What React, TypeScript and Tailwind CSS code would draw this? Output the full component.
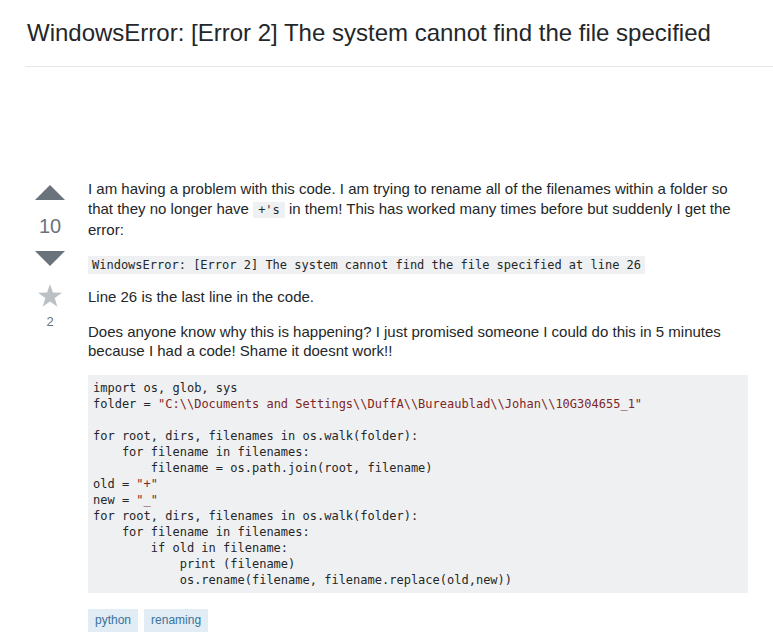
import React from 'react';

const Str = ({ children }: { children: React.ReactNode }) => (
  <span className="text-[#7d2727]">{children}</span>
);

const App = () => {
  return (
    <div className="min-h-[641px] bg-white pl-[25px] text-[#242729] font-['Liberation_Sans',Arial,sans-serif] overflow-hidden">
      {/* Question title */}
      <div className="pt-[18px] pb-[18px] border-b border-[#e4e6e8]">
        <h1 className="text-[24px] leading-[30px] pl-[2px] text-[#242729]">
          WindowsError: [Error 2] The system cannot find the file specified
        </h1>
      </div>

      {/* Post */}
      <div className="flex mt-[112px]">
        {/* Votes */}
        <div className="w-[50px] mr-[13px] flex flex-col items-center pt-[6px]">
          <svg width="30" height="15" viewBox="0 0 30 15">
            <path d="M0 15 L15 0 L30 15 Z" fill="#6a737c" />
          </svg>
          <div className="text-[20px] leading-[24px] text-[#6a737c] mt-[14px]">10</div>
          <svg width="30" height="15" viewBox="0 0 30 15" className="mt-[13px]">
            <path d="M0 0 L30 0 L15 15 Z" fill="#6a737c" />
          </svg>
          <svg width="24" height="23" viewBox="0 0 24 23" className="mt-[18px]">
            <path d="M12 0 L14.9 8.6 L24 8.7 L16.7 14.1 L19.4 22.8 L12 17.5 L4.6 22.8 L7.3 14.1 L0 8.7 L9.1 8.6 Z" fill="#bbc0c4" />
          </svg>
          <div className="text-[13px] leading-[16px] text-[#6a737c] mt-[7px]">2</div>
        </div>

        {/* Body */}
        <div className="w-[660px] text-[15px] leading-[19.5px]">
          <p className="mb-[14px]">
            I am having a problem with this code. I am trying to rename all of the filenames within a folder so
            that they no longer have{' '}
            <code className="bg-[#eff0f1] px-[5px] py-[1px] text-[12px] font-['DejaVu_Sans_Mono',monospace]">+'s</code>{' '}
            in them! This has worked many times before but suddenly I get the error:
          </p>
          <p className="mb-[12px]">
            <code className="bg-[#eff0f1] px-[4px] py-[2px] text-[12px] font-['DejaVu_Sans_Mono',monospace]">
              WindowsError: [Error 2] The system cannot find the file specified at line 26
            </code>
          </p>
          <p className="mb-[15px]">Line 26 is the last line in the code.</p>
          <p className="mb-[14px]">
            Does anyone know why this is happening? I just promised someone I could do this in 5 minutes
            because I had a code! Shame it doesnt work!!
          </p>
          <pre className="bg-[#eff0f1] px-[5px] py-[5px] text-[12px] leading-[16px] text-[#242729] font-['DejaVu_Sans_Mono',monospace]">
            {'import os, glob, sys\nfolder = '}
            <Str>{'"C:\\\\Documents and Settings\\\\DuffA\\\\Bureaublad\\\\Johan\\\\10G304655_1"'}</Str>
            {'\n\nfor root, dirs, filenames in os.walk(folder):\n    for filename in filenames:\n        filename = os.path.join(root, filename)\nold = '}
            <Str>{'"+"'}</Str>
            {'\nnew = '}
            <Str>{'"_"'}</Str>
            {'\nfor root, dirs, filenames in os.walk(folder):\n    for filename in filenames:\n        if old in filename:\n            print (filename)\n            os.rename(filename, filename.replace(old,new))'}
          </pre>
          <div className="flex gap-[6px] mt-[16px]">
            <span className="bg-[#e1ecf4] text-[#39739d] text-[12px] leading-[23px] px-[7px]">python</span>
            <span className="bg-[#e1ecf4] text-[#39739d] text-[12px] leading-[23px] px-[7px]">renaming</span>
          </div>
        </div>
      </div>
    </div>
  );
};

export default App;
